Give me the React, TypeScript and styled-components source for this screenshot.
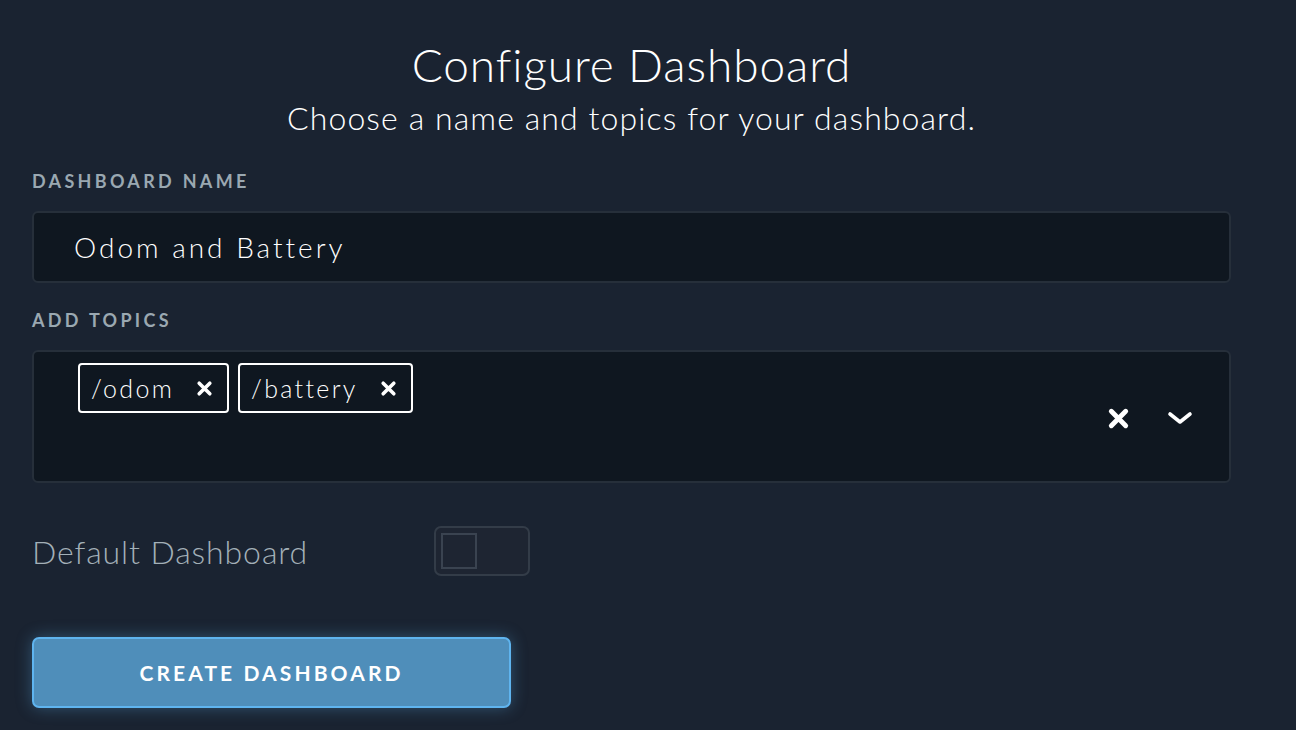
import { useState } from "react";

import styled, { createGlobalStyle } from "styled-components";

const GlobalStyle = createGlobalStyle`
  html, body {
    margin: 0;
    padding: 0;
    background: #1a2331;
  }
  body {
    font-family: "Lato", "Open Sans", sans-serif;
    color: #ffffff;
  }
`;

export default function App() {
  const [topics, setTopics] = useState(["/odom", "/battery"]);
  const [isDefault, setIsDefault] = useState(false);

  return (
    <>
      <GlobalStyle />
      <Page>
        <Form>
          <Title>Configure Dashboard</Title>
          <Subtitle>Choose a name and topics for your dashboard.</Subtitle>

          <Label $top={32}>Dashboard Name</Label>
          <NameInput defaultValue="Odom and Battery" />

          <Label $top={25}>Add Topics</Label>
          <TopicBox>
            <Chips>
              {topics.map((topic) => (
                <Chip key={topic}>
                  {topic}
                  <ChipRemove onClick={() => setTopics(topics.filter((t) => t !== topic))}>
                    <XIcon size={17} />
                  </ChipRemove>
                </Chip>
              ))}
            </Chips>
            <Controls>
              <IconButton onClick={() => setTopics([])}>
                <XIcon size={23} />
              </IconButton>
              <IconButton>
                <svg width="28" height="28" viewBox="0 0 28 28" fill="none">
                  <path d="M4 10l10 8 10-8" stroke="#fff" strokeWidth="3.6" strokeLinecap="round" strokeLinejoin="round" />
                </svg>
              </IconButton>
            </Controls>
          </TopicBox>

          <DefaultRow>
            <DefaultLabel>Default Dashboard</DefaultLabel>
            <Toggle $on={isDefault} onClick={() => setIsDefault(!isDefault)}>
              <Knob $on={isDefault} />
            </Toggle>
          </DefaultRow>

          <CreateButton>Create Dashboard</CreateButton>
        </Form>
      </Page>
    </>
  );
}

function XIcon({ size }: { size: number }) {
  return (
    <svg width={size} height={size} viewBox="0 0 16 16" fill="none">
      <path d="M3 3l10 10M13 3L3 13" stroke="#fff" strokeWidth="3.4" strokeLinecap="round" />
    </svg>
  );
}

const Page = styled.div`
  width: 1296px;
  height: 730px;
  overflow: hidden;
  padding: 0 32px;
  box-sizing: border-box;
`;

const Form = styled.div`
  width: 1199px;
  display: flex;
  flex-direction: column;
`;

const Title = styled.h1`
  margin: 39px 0 0 0;
  text-align: center;
  font-size: 46px;
  font-weight: 300;
  line-height: 52px;
  letter-spacing: 0.9px;
`;

const Subtitle = styled.div`
  margin-top: 8px;
  text-align: center;
  font-size: 32px;
  font-weight: 300;
  line-height: 38px;
  letter-spacing: 1.1px;
`;

const Label = styled.div<{ $top: number }>`
  margin-top: ${(props) => props.$top}px;
  font-size: 18px;
  font-weight: 700;
  letter-spacing: 3.3px;
  text-transform: uppercase;
  color: #9aa8b1;
  line-height: 24px;
`;

const NameInput = styled.input`
  box-sizing: border-box;
  width: 100%;
  height: 72px;
  margin-top: 18px;
  padding: 0 0 0 40px;
  background: #0f1720;
  border: 2px solid #262f3a;
  border-radius: 6px;
  color: #ffffff;
  font-family: inherit;
  font-size: 28px;
  font-weight: 300;
  letter-spacing: 3px;
  outline: none;
`;

const TopicBox = styled.div`
  box-sizing: border-box;
  margin-top: 18px;
  height: 133px;
  background: #0f1720;
  border: 2px solid #262f3a;
  border-radius: 6px;
  display: flex;
  align-items: flex-start;
  padding: 11px 32px 0 44px;
`;

const Chips = styled.div`
  flex: 1;
  display: flex;
  gap: 9px;
`;

const Chip = styled.div`
  box-sizing: border-box;
  height: 50px;
  display: flex;
  align-items: center;
  gap: 22px;
  padding: 0 14px 0 11px;
  border: 2px solid #ffffff;
  border-radius: 4px;
  font-size: 25px;
  font-weight: 300;
  letter-spacing: 2.3px;
`;

const ChipRemove = styled.span`
  display: flex;
  cursor: pointer;
`;

const Controls = styled.div`
  align-self: center;
  display: flex;
  align-items: center;
  gap: 28px;
  margin-top: -8px;
`;

const IconButton = styled.span`
  display: flex;
  align-items: center;
  justify-content: center;
  width: 34px;
  height: 34px;
  cursor: pointer;
`;

const DefaultRow = styled.div`
  display: flex;
  align-items: center;
  margin-top: 43px;
`;

const DefaultLabel = styled.div`
  width: 402px;
  font-size: 32px;
  font-weight: 300;
  letter-spacing: 0.9px;
  color: #a3b0b8;
`;

const Toggle = styled.div<{ $on: boolean }>`
  box-sizing: border-box;
  width: 96px;
  height: 50px;
  border: 2px solid #333c48;
  border-radius: 7px;
  padding: 5px;
  background: ${(props) => (props.$on ? "#4f8eba" : "#1e2532")};
  display: flex;
  justify-content: ${(props) => (props.$on ? "flex-end" : "flex-start")};
  cursor: pointer;
`;

const Knob = styled.div<{ $on: boolean }>`
  box-sizing: border-box;
  width: 36px;
  height: 36px;
  border: 2px solid #3a4350;
  background: #1e2532;
`;

const CreateButton = styled.button`
  box-sizing: border-box;
  margin-top: 61px;
  width: 479px;
  height: 71px;
  background: #4f8eba;
  border: 2px solid #5fb4ef;
  border-radius: 7px;
  box-shadow: 0 0 16px rgba(95, 180, 239, 0.35);
  color: #ffffff;
  font-family: inherit;
  font-size: 21px;
  font-weight: 700;
  letter-spacing: 3.1px;
  text-transform: uppercase;
  cursor: pointer;
`;
